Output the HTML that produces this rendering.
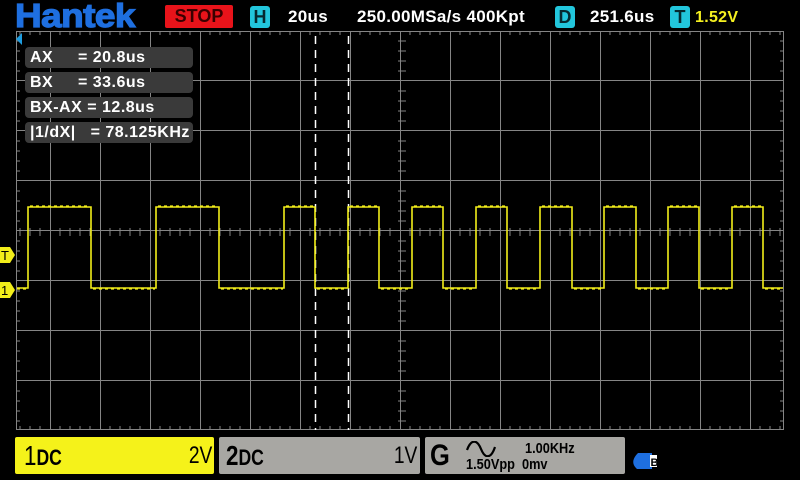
<!DOCTYPE html>
<html><head><meta charset="utf-8"><style>
*{margin:0;padding:0;box-sizing:border-box}
body{width:800px;height:480px;background:#000;overflow:hidden;position:relative;font-family:"Liberation Sans",sans-serif;color:#fff}
.a{position:absolute;white-space:nowrap}
.box{position:absolute;background:#22c6dc;border-radius:3px;color:#062a30;font-weight:bold;text-align:center}
.t{font-weight:bold;font-size:17px;letter-spacing:0.3px}
.m{position:absolute;left:25px;width:168px;height:21px;background:#3a3a3a;border-radius:4px;font-size:16px;line-height:21px;padding-left:5px;letter-spacing:0.5px;font-weight:bold;white-space:nowrap;overflow:visible}
.ch{position:absolute;top:437px;height:37px;border-radius:2px;color:#000}
</style></head><body>
<div class="a" style="left:15px;top:-3px;font-size:33px;font-weight:bold;color:#1e6fe0;letter-spacing:-0.5px;transform:scaleX(1.12);transform-origin:left;-webkit-text-stroke:1.2px #1e6fe0">Hantek</div>
<div class="a" style="left:165px;top:5px;width:68px;height:23px;background:#e8131a;border-radius:2px;color:#3a0000;font-weight:bold;font-size:18px;line-height:23px;text-align:center">STOP</div>
<div class="box" style="left:250px;top:6px;width:20px;height:22px;font-size:18px;line-height:22px">H</div>
<div class="a t" style="left:288px;top:7px">20us</div>
<div class="a t" style="left:357px;top:7px">250.00MSa/s 400Kpt</div>
<div class="box" style="left:555px;top:6px;width:20px;height:22px;font-size:18px;line-height:22px">D</div>
<div class="a t" style="left:590px;top:7px">251.6us</div>
<div class="box" style="left:670px;top:6px;width:20px;height:22px;font-size:18px;line-height:22px">T</div>
<div class="a t" style="left:695px;top:9px;font-size:16px;color:#f5f020">1.52V</div>
<svg class="a" style="left:0;top:0" width="800" height="480">
<g stroke="#858585" stroke-width="1" fill="none">
<rect x="16.5" y="31.5" width="767" height="398"/>
<path d="M50.5 31V430M100.5 31V430M150.5 31V430M200.5 31V430M250.5 31V430M300.5 31V430M350.5 31V430M400.5 31V430M450.5 31V430M500.5 31V430M550.5 31V430M600.5 31V430M650.5 31V430M700.5 31V430M750.5 31V430"/>
<path d="M16 80.5H784M16 130.5H784M16 180.5H784M16 230.5H784M16 280.5H784M16 330.5H784M16 380.5H784"/>
<path id="tk" d="M20 31v4M30 31v4M40 31v4M60 31v4M70 31v4M80 31v4M90 31v4M110 31v4M120 31v4M130 31v4M140 31v4M160 31v4M170 31v4M180 31v4M190 31v4M210 31v4M220 31v4M230 31v4M240 31v4M260 31v4M270 31v4M280 31v4M290 31v4M310 31v4M320 31v4M330 31v4M340 31v4M360 31v4M370 31v4M380 31v4M390 31v4M410 31v4M420 31v4M430 31v4M440 31v4M460 31v4M470 31v4M480 31v4M490 31v4M510 31v4M520 31v4M530 31v4M540 31v4M560 31v4M570 31v4M580 31v4M590 31v4M610 31v4M620 31v4M630 31v4M640 31v4M660 31v4M670 31v4M680 31v4M690 31v4M710 31v4M720 31v4M730 31v4M740 31v4M760 31v4M770 31v4M780 31v4"/>
<use href="#tk" y="395"/>
<use href="#tk" y="197"/>
<use href="#tk" y="201"/>
<path d="M16 41h4M16 51h4M16 61h4M16 71h4M16 91h4M16 101h4M16 111h4M16 121h4M16 141h4M16 151h4M16 161h4M16 171h4M16 191h4M16 201h4M16 211h4M16 221h4M16 241h4M16 251h4M16 261h4M16 271h4M16 291h4M16 301h4M16 311h4M16 321h4M16 341h4M16 351h4M16 361h4M16 371h4M16 391h4M16 401h4M16 411h4M16 421h4" id="vt"/>
<use href="#vt" x="764"/>
<use href="#vt" x="382"/>
<use href="#vt" x="386"/>
</g>
<g stroke="#fff" stroke-width="1.5" stroke-dasharray="8,6"><path d="M315.5 36V430M348.5 36V430"/></g>
<path d="M17 288H28V207H91V288H156V207H219V288H284V207H315V288H348V207H379V288H412V207H443V288H476V207H507V288H540V207H572V288H604V207H636V288H668V207H699V288H732V207H763V288H783" stroke="#f2ee1a" stroke-width="1.6" fill="none"/>
<path d="M30 206H90M158 206H218M286 206H314M350 206H378M414 206H442M478 206H506M542 206H571M606 206H635M670 206H698M734 206H762M17 289H27M93 289H155M221 289H283M317 289H347M381 289H411M445 289H475M509 289H539M574 289H603M638 289H667M701 289H731M765 289H783" stroke="#f2ee1a" stroke-width="1.2" stroke-dasharray="3,3" fill="none"/>
<path d="M16 39L22 33V45Z" fill="#1d9de0"/>
<path d="M0 247H10L15 255L10 263H0Z" fill="#f2ee1a"/>
<path d="M0 282H10L15 290L10 298H0Z" fill="#f2ee1a"/>
<text x="1" y="260" font-size="13" fill="#000" font-family="Liberation Sans">T</text>
<text x="1" y="295" font-size="13" fill="#000" font-family="Liberation Sans">1</text>
<path d="M638 453H652V469H637Q629 462 638 453Z" fill="#1e6fe0"/>
<rect x="650" y="455" width="7" height="12" fill="#fff"/>
<text x="650.5" y="466" font-size="11" font-weight="bold" fill="#000" font-family="Liberation Sans">B</text>
</svg>
<div class="m" style="top:47px">AX &nbsp;&nbsp;&nbsp; = 20.8us</div>
<div class="m" style="top:72px">BX &nbsp;&nbsp;&nbsp; = 33.6us</div>
<div class="m" style="top:97px">BX-AX = 12.8us</div>
<div class="m" style="top:122px">|1/dX| &nbsp; = 78.125KHz</div>
<div class="ch" style="left:15px;width:199px;background:#f5f21a">
<span class="a" style="left:9px;top:3px;font-size:28px;transform:scaleX(0.8);transform-origin:left">1<span style="font-size:22px;font-weight:bold">DC</span></span>
<span class="a" style="right:2px;top:5px;font-size:24px;transform:scaleX(0.8);transform-origin:right">2V</span></div>
<div class="ch" style="left:219px;width:201px;background:#a8a7a3">
<span class="a" style="left:7px;top:3px;font-size:28px;font-weight:bold;transform:scaleX(0.8);transform-origin:left">2<span style="font-size:22px">DC</span></span>
<span class="a" style="right:3px;top:5px;font-size:24px;transform:scaleX(0.8);transform-origin:right">1V</span></div>
<div class="ch" style="left:425px;width:200px;background:#a8a7a3">
<span class="a" style="left:5px;top:2px;font-size:30px;font-weight:bold;transform:scaleX(0.85);transform-origin:left">G</span>
<svg class="a" style="left:40px;top:4px" width="32" height="16"><path d="M2 9C6 -2 12 -2 16 8S26 18 30 6" stroke="#000" stroke-width="2.2" fill="none"/></svg>
<span class="a" style="left:100px;top:3px;font-size:15px;font-weight:bold;transform:scaleX(0.85);transform-origin:left">1.00KHz</span>
<span class="a" style="left:41px;top:19px;font-size:15px;font-weight:bold;transform:scaleX(0.85);transform-origin:left">1.50Vpp&nbsp; 0mv</span></div>
</body></html>
